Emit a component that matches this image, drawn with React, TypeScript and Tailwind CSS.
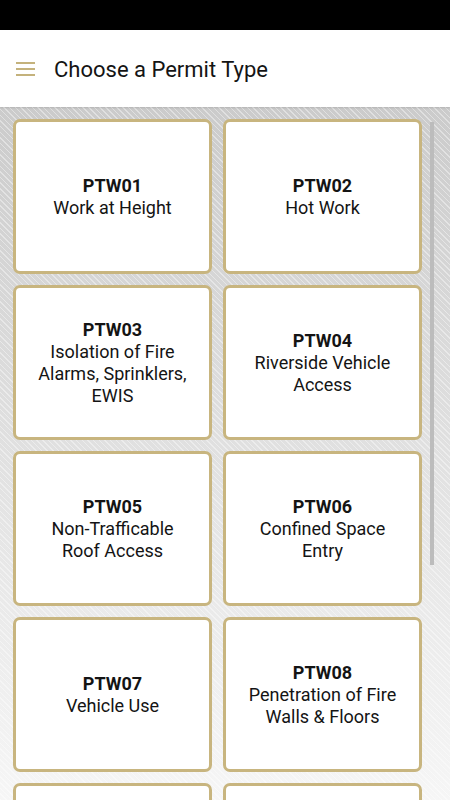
const permits = [
  { code: 'PTW01', name: 'Work at Height' },
  { code: 'PTW02', name: 'Hot Work' },
  { code: 'PTW03', name: 'Isolation of Fire Alarms, Sprinklers, EWIS' },
  { code: 'PTW04', name: 'Riverside Vehicle Access' },
  { code: 'PTW05', name: 'Non-Trafficable Roof Access' },
  { code: 'PTW06', name: 'Confined Space Entry' },
  { code: 'PTW07', name: 'Vehicle Use' },
  { code: 'PTW08', name: 'Penetration of Fire Walls & Floors' },
];

function MenuIcon() {
  return (
    <svg width="19" height="14" viewBox="0 0 19 14" className="shrink-0">
      <rect x="0" y="0" width="19" height="2" fill="#c4b27c" />
      <rect x="0" y="6" width="19" height="2" fill="#c4b27c" />
      <rect x="0" y="12" width="19" height="2" fill="#c4b27c" />
    </svg>
  );
}

export default function App() {
  return (
    <div className="h-screen flex flex-col overflow-hidden font-['Roboto',sans-serif] text-[#141414]">
      {/* status bar */}
      <div className="h-[30px] bg-black shrink-0" />

      {/* header */}
      <header className="h-[77px] bg-white shrink-0 flex items-center pl-4 gap-[19px] shadow-[0_1px_2px_rgba(0,0,0,0.12)] relative z-10">
        <MenuIcon />
        <h1 className="text-[22px] pt-[2px]">Choose a Permit Type</h1>
      </header>

      {/* permit grid */}
      <main className="flex-1 relative overflow-hidden bg-[repeating-linear-gradient(45deg,rgba(255,255,255,0.4)_0px,rgba(255,255,255,0.4)_1px,transparent_1px,transparent_4px),linear-gradient(to_bottom,#cbcbcb,#f6f6f6)]">
        <div className="grid grid-cols-2 gap-[11px] pt-3 pl-[13px] pr-[28px]">
          {permits.map(p => (
            <button
              key={p.code}
              className="h-[155px] bg-white border-[3px] border-[#c8b57f] rounded-[7px] flex flex-col items-center justify-center px-5 text-center"
            >
              <span className="text-[18px] font-bold leading-[22px]">{p.code}</span>
              <span className="text-[18px] leading-[22px]">{p.name}</span>
            </button>
          ))}
          {/* next row, only its top edge is in view */}
          <div className="h-[155px] bg-white border-[3px] border-[#c8b57f] rounded-[7px]" />
          <div className="h-[155px] bg-white border-[3px] border-[#c8b57f] rounded-[7px]" />
        </div>
        {/* scrollbar */}
        <div className="absolute left-[430px] top-[15px] w-[4px] h-[443px] bg-[#bcbcbc]" />
      </main>
    </div>
  );
}
